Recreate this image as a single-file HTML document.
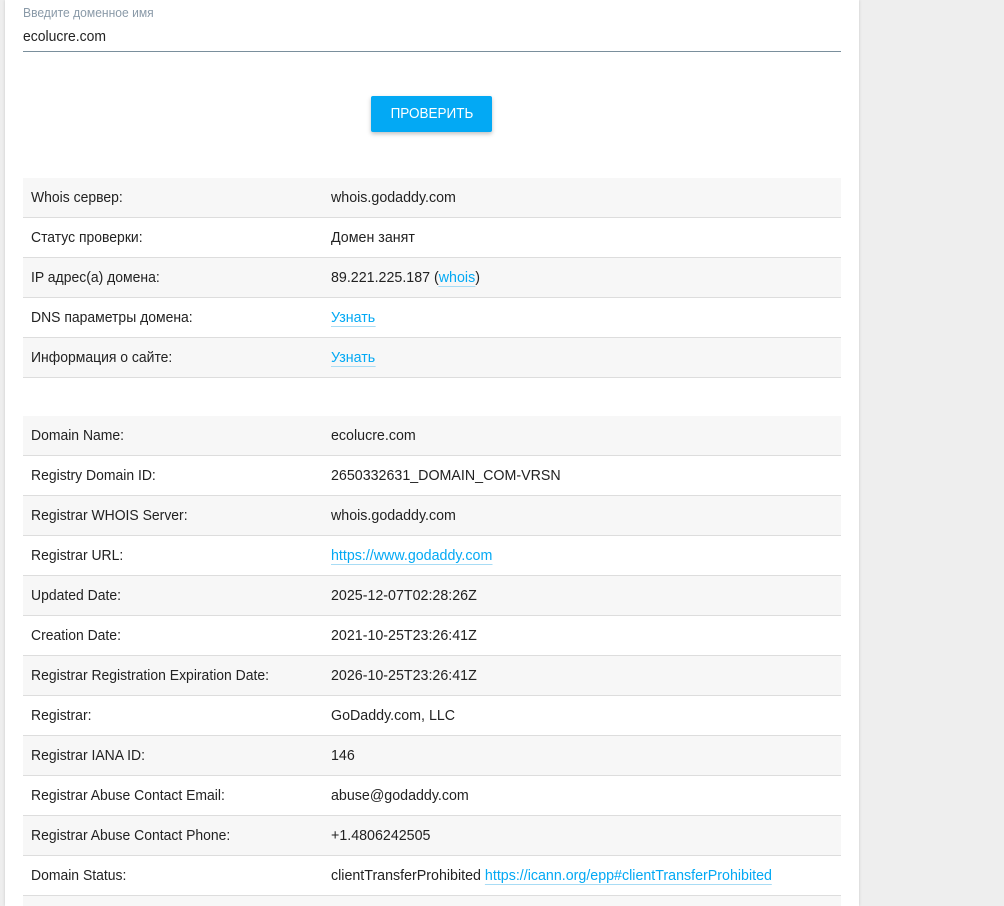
<!DOCTYPE html>
<html style="overflow:hidden"><head><meta charset="utf-8"><style>
html,body{margin:0;width:1004px;height:906px;overflow:hidden;}
body{background:#eeeeee;position:relative;font-family:"Liberation Sans",sans-serif;color:#222;}
.card{position:absolute;left:5px;top:0;width:854px;height:906px;background:#fff;box-shadow:0 0 3px rgba(0,0,0,.15);}
.lbl{position:absolute;left:23px;top:5px;font-size:13px;color:#8a9aa8;transform:scaleX(.93);transform-origin:left;}
.inp{position:absolute;left:23px;top:28px;font-size:15px;color:#222;transform:scaleX(.93);transform-origin:left;}
.line{position:absolute;left:23px;top:51px;width:818px;height:1px;background:#7a8f9c;}
.btn{position:absolute;left:371px;top:96px;width:121px;height:36px;background:#03a9f4;color:#fff;font-size:15px;text-align:center;line-height:36px;border-radius:2px;box-shadow:0 2px 4px rgba(0,0,0,.25);}
.btn i{font-style:normal;display:inline-block;transform:scaleX(.9);}
.tbl{position:absolute;left:23px;width:818px;}
.r{height:39px;border-bottom:1px solid #ddd;font-size:15px;line-height:39px;position:relative;}
.r:nth-child(odd){background:#f7f7f7;}
.r span{position:absolute;left:8px;transform:scaleX(.93);transform-origin:left;white-space:nowrap;}
.r b{font-weight:normal;position:absolute;left:308px;transform:scaleX(.95);transform-origin:left;white-space:nowrap;}
a{color:#03a9f4;text-decoration:none;border-bottom:1px solid #a8dcf5;line-height:17px;display:inline-block;}
</style></head><body>
<div class="line"></div>
<div class="card"></div>
<div class="lbl">Введите доменное имя</div>
<div class="inp">ecolucre.com</div>
<div class="line"></div>
<div class="btn"><i>ПРОВЕРИТЬ</i></div>
<div class="tbl" style="top:178px">
<div class="r"><span>Whois сервер:</span><b>whois.godaddy.com</b></div>
<div class="r"><span>Статус проверки:</span><b>Домен занят</b></div>
<div class="r"><span>IP адрес(а) домена:</span><b>89.221.225.187 (<a>whois</a>)</b></div>
<div class="r"><span>DNS параметры домена:</span><b><a>Узнать</a></b></div>
<div class="r"><span>Информация о сайте:</span><b><a>Узнать</a></b></div>
</div>
<div class="tbl" style="top:416px">
<div class="r"><span>Domain Name:</span><b>ecolucre.com</b></div>
<div class="r"><span>Registry Domain ID:</span><b>2650332631_DOMAIN_COM-VRSN</b></div>
<div class="r"><span>Registrar WHOIS Server:</span><b>whois.godaddy.com</b></div>
<div class="r"><span>Registrar URL:</span><b><a>https://www.godaddy.com</a></b></div>
<div class="r"><span>Updated Date:</span><b>2025-12-07T02:28:26Z</b></div>
<div class="r"><span>Creation Date:</span><b>2021-10-25T23:26:41Z</b></div>
<div class="r"><span>Registrar Registration Expiration Date:</span><b>2026-10-25T23:26:41Z</b></div>
<div class="r"><span>Registrar:</span><b>GoDaddy.com, LLC</b></div>
<div class="r"><span>Registrar IANA ID:</span><b>146</b></div>
<div class="r"><span>Registrar Abuse Contact Email:</span><b>abuse@godaddy.com</b></div>
<div class="r"><span>Registrar Abuse Contact Phone:</span><b>+1.4806242505</b></div>
<div class="r"><span>Domain Status:</span><b>clientTransferProhibited <a>https://icann.org/epp#clientTransferProhibited</a></b></div>
<div class="r" style="height:12px;border:0"></div>
</div>
</body></html>
